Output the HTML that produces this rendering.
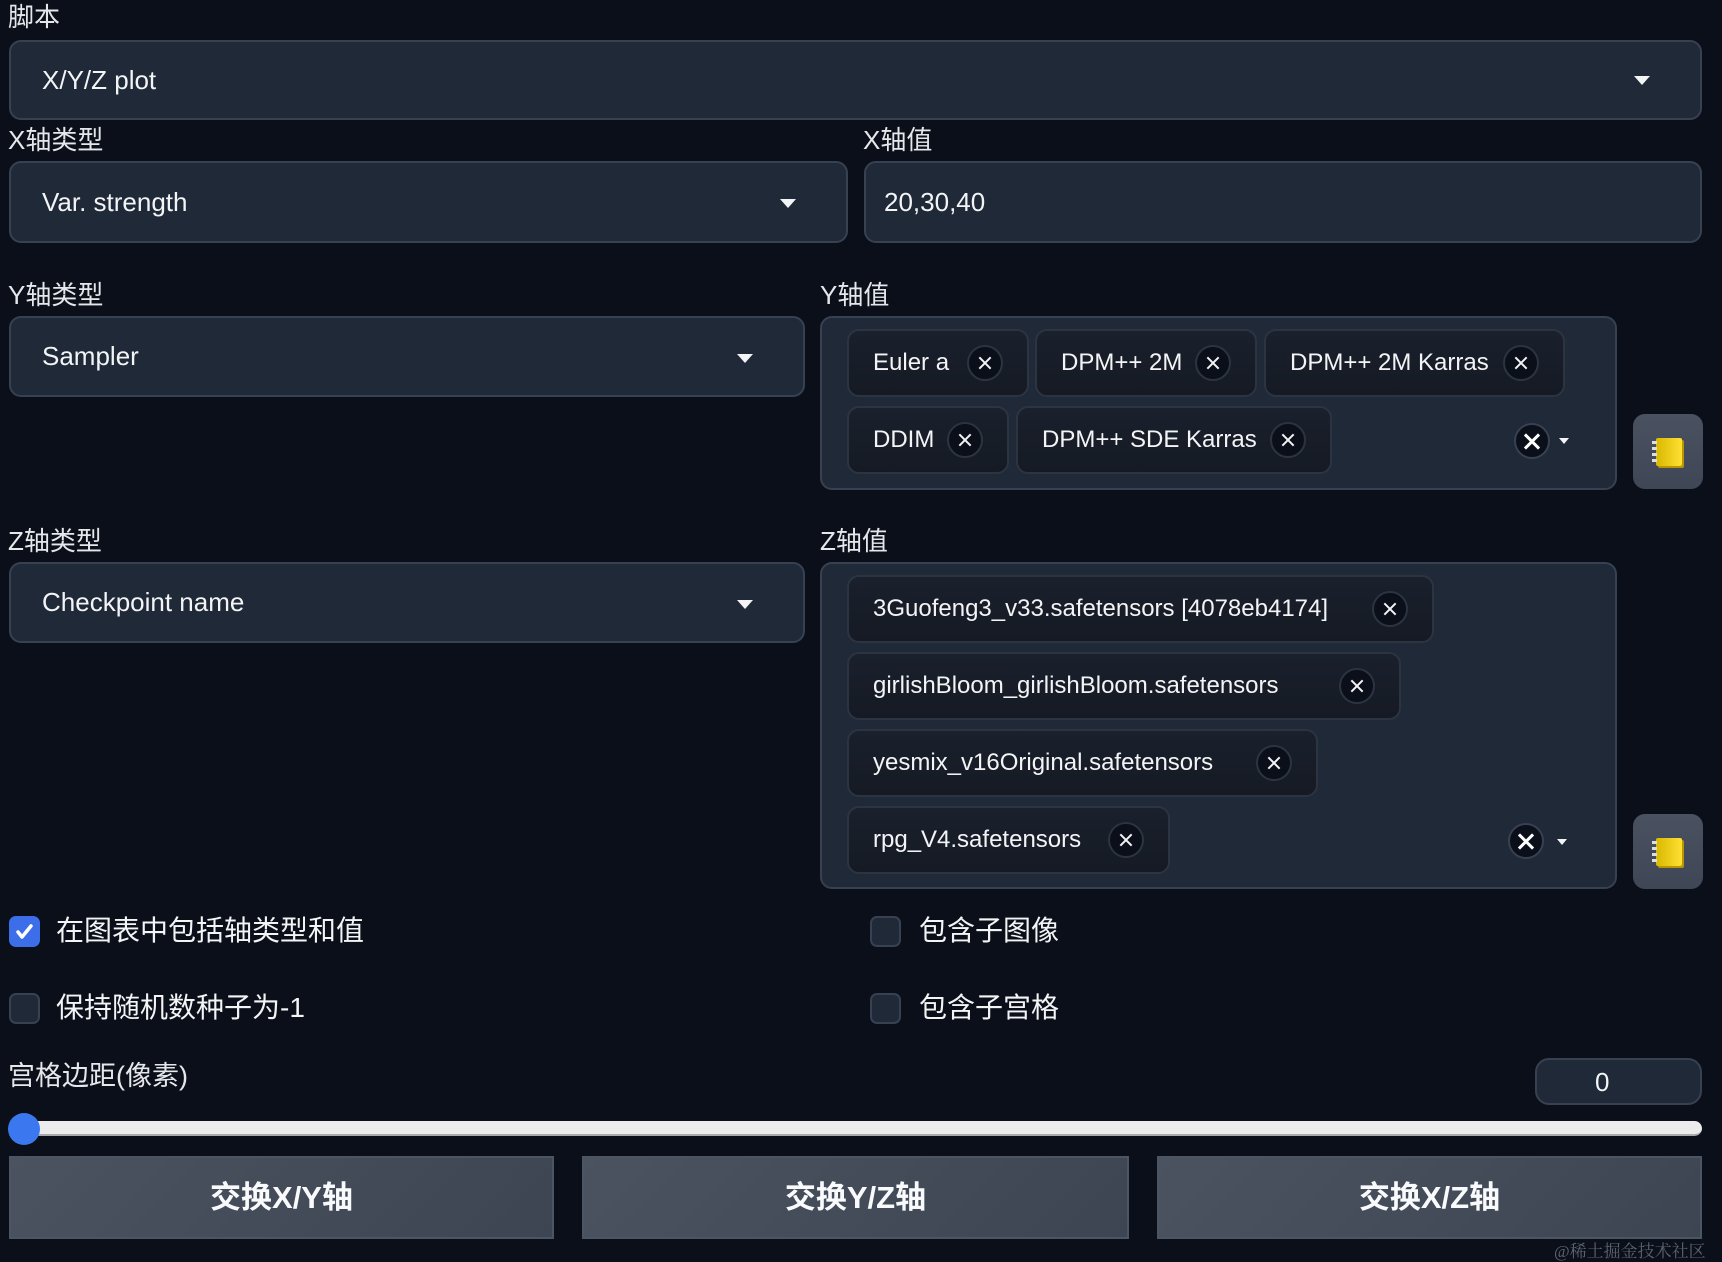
<!DOCTYPE html>
<html><head><meta charset="utf-8"><style>
*{box-sizing:border-box;margin:0;padding:0}
body{width:1722px;height:1262px;background:#0b0f19;position:relative;overflow:hidden;font-family:"Liberation Sans","Noto Sans CJK SC",sans-serif;color:#f3f4f6}
.a{position:absolute}
.lbl{position:absolute;font-size:26px;line-height:30px;color:#e5e7eb}
.box{position:absolute;background:#1f2937;border:2px solid #374151;border-radius:12px}
.txt{position:absolute;font-size:26px;line-height:30px;color:#f3f4f6}
.tri{position:absolute;width:0;height:0;border-left:8px solid transparent;border-right:8px solid transparent;border-top:9px solid #f3f4f6}
.tri.s{border-left-width:5px;border-right-width:5px;border-top-width:6px}
.chip{position:absolute;height:68px;background:linear-gradient(#1a202c,#151a24);border:2px solid #2c3442;border-radius:12px;font-size:24px;line-height:64px;padding-left:24px;white-space:nowrap;color:#f3f4f6}
.x{position:absolute;top:14px;right:24px;width:36px;height:36px;border-radius:50%;background:#0b0f19;border:2px solid #2c3442}
.x:before,.x:after{content:"";position:absolute;left:8px;top:15px;width:16px;height:2px;background:#f3f4f6;transform:rotate(45deg)}
.x:after{transform:rotate(-45deg)}
.cx{position:absolute;width:36px;height:36px;border-radius:50%;background:#0b0f19;border:2px solid #374151}
.cx:before,.cx:after{content:"";position:absolute;left:6px;top:15px;width:20px;height:3px;background:#fff;transform:rotate(45deg)}
.cx:after{transform:rotate(-45deg)}
.nb{position:absolute;width:70px;height:75px;border-radius:12px;background:linear-gradient(#4a5261,#3f4756)}
.book{position:absolute;left:23px;top:24px;width:26px;height:28px;background:linear-gradient(90deg,#d9b800,#ffe033);border-radius:2px;box-shadow:2px 2px 0 #b89600}
.book:before{content:"";position:absolute;left:-4px;top:3px;width:5px;height:22px;background:repeating-linear-gradient(#ddd 0 3px,transparent 3px 6px)}
.cb{position:absolute;width:31px;height:31px;border-radius:7px;background:#1f2937;border:2px solid #374151}
.cbt{position:absolute;font-size:28px;line-height:32px;color:#f3f4f6}
.btn{position:absolute;top:1156px;height:83px;background:linear-gradient(135deg,#4b5361,#3d4553);border:2px solid #4b5563;font-weight:bold;font-size:31px;line-height:79px;text-align:center;color:#f9fafb}
</style></head><body>
<div class="lbl" style="left:8px;top:2px">脚本</div>
<div class="box" style="left:9px;top:40px;width:1693px;height:80px"></div>
<div class="txt" style="left:42px;top:65px">X/Y/Z plot</div>
<div class="tri" style="left:1634px;top:76px"></div>

<div class="lbl" style="left:8px;top:125px">X轴类型</div>
<div class="box" style="left:9px;top:161px;width:839px;height:82px"></div>
<div class="txt" style="left:42px;top:187px">Var. strength</div>
<div class="tri" style="left:780px;top:199px"></div>
<div class="lbl" style="left:863px;top:125px">X轴值</div>
<div class="box" style="left:864px;top:161px;width:838px;height:82px"></div>
<div class="txt" style="left:884px;top:187px">20,30,40</div>

<div class="lbl" style="left:8px;top:280px">Y轴类型</div>
<div class="box" style="left:9px;top:316px;width:796px;height:81px"></div>
<div class="txt" style="left:42px;top:341px">Sampler</div>
<div class="tri" style="left:737px;top:354px"></div>
<div class="lbl" style="left:820px;top:280px">Y轴值</div>
<div class="box" style="left:820px;top:316px;width:797px;height:174px"></div>
<div class="chip" style="left:847px;top:329px;width:182px">Euler a<span class="x"></span></div>
<div class="chip" style="left:1035px;top:329px;width:222px">DPM++ 2M<span class="x"></span></div>
<div class="chip" style="left:1264px;top:329px;width:301px">DPM++ 2M Karras<span class="x"></span></div>
<div class="chip" style="left:847px;top:406px;width:162px">DDIM<span class="x"></span></div>
<div class="chip" style="left:1016px;top:406px;width:316px">DPM++ SDE Karras<span class="x"></span></div>
<div class="cx" style="left:1514px;top:423px"></div>
<div class="tri s" style="left:1559px;top:438px"></div>
<div class="nb" style="left:1633px;top:414px"><div class="book"></div></div>

<div class="lbl" style="left:8px;top:526px">Z轴类型</div>
<div class="box" style="left:9px;top:562px;width:796px;height:81px"></div>
<div class="txt" style="left:42px;top:587px">Checkpoint name</div>
<div class="tri" style="left:737px;top:600px"></div>
<div class="lbl" style="left:820px;top:526px">Z轴值</div>
<div class="box" style="left:820px;top:562px;width:797px;height:327px"></div>
<div class="chip" style="left:847px;top:575px;width:587px">3Guofeng3_v33.safetensors [4078eb4174]<span class="x"></span></div>
<div class="chip" style="left:847px;top:652px;width:554px">girlishBloom_girlishBloom.safetensors<span class="x"></span></div>
<div class="chip" style="left:847px;top:729px;width:471px">yesmix_v16Original.safetensors<span class="x"></span></div>
<div class="chip" style="left:847px;top:806px;width:323px">rpg_V4.safetensors<span class="x"></span></div>
<div class="cx" style="left:1508px;top:823px"></div>
<div class="tri s" style="left:1557px;top:839px"></div>
<div class="nb" style="left:1633px;top:814px"><div class="book"></div></div>

<div class="cb" style="left:9px;top:916px;background:#3b6ee8;border-color:#3b6ee8"><svg width="27" height="27" viewBox="0 0 27 27" style="position:absolute;left:0;top:0"><path d="M7 14l4 5 9-11" stroke="#fff" stroke-width="3.5" fill="none" stroke-linecap="round" stroke-linejoin="round"/></svg></div>
<div class="cbt" style="left:56px;top:915px">在图表中包括轴类型和值</div>
<div class="cb" style="left:870px;top:916px"></div>
<div class="cbt" style="left:919px;top:915px">包含子图像</div>
<div class="cb" style="left:9px;top:993px"></div>
<div class="cbt" style="left:56px;top:992px">保持随机数种子为-1</div>
<div class="cb" style="left:870px;top:993px"></div>
<div class="cbt" style="left:919px;top:992px">包含子宫格</div>

<div class="lbl" style="left:8px;top:1061px;font-size:27px">宫格边距(像素)</div>
<div class="box" style="left:1535px;top:1058px;width:167px;height:47px;border-radius:14px"></div>
<div class="txt" style="left:1595px;top:1067px">0</div>
<div class="a" style="left:10px;top:1121px;width:1692px;height:15px;background:#ececec;border-radius:8px;border-bottom:2px solid #aaa"></div>
<div class="a" style="left:8px;top:1113px;width:32px;height:32px;border-radius:50%;background:#3b78f0"></div>

<div class="btn" style="left:9px;width:545px">交换X/Y轴</div>
<div class="btn" style="left:582px;width:547px">交换Y/Z轴</div>
<div class="btn" style="left:1157px;width:545px">交换X/Z轴</div>
<div class="a" style="left:1554px;top:1237px;font-family:'Liberation Serif','Noto Serif CJK SC',serif;font-size:17px;color:#5b6270">@稀土掘金技术社区</div>
</body></html>
